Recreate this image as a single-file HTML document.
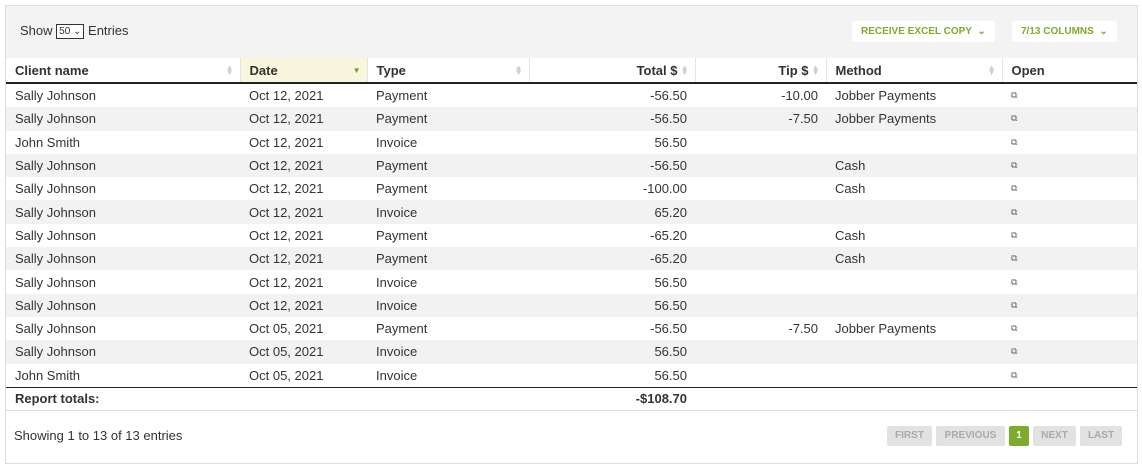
<!DOCTYPE html><html><head><style>
body{margin:0;width:1142px;height:468px;background:#fff;font-family:"Liberation Sans",sans-serif;color:#333;}
.box{position:absolute;left:5px;top:5px;width:1131px;height:457px;border:1px solid #ddd;background:#fff}
.top{position:absolute;left:0;top:0;width:1131px;height:52px;background:#f3f3f3}
.show{position:absolute;left:14px;top:17px;font-size:13px;color:#333}
.sel{display:inline-block;border:1px solid #333;font-size:10px;padding:0 2px;height:13px;line-height:13px;vertical-align:1px;background:#fff}
.btn{position:absolute;top:15px;height:21px;background:#fff;color:#7dab2e;font-weight:bold;font-size:10px;line-height:21px;padding:0 9px;border-radius:2px}
table{position:absolute;left:0;top:52px;border-collapse:collapse;width:1131px;font-size:13px;table-layout:fixed}
th{height:24px;text-align:left;font-weight:bold;font-size:13px;padding:0 9px;border-left:1px solid #e4e4e4;border-bottom:2px solid #222;position:relative;color:#333}
th:first-child{border-left:none}
td{height:23.3px;padding:0 9px;white-space:nowrap}
tr.g td{background:#f2f2f2}
.r{text-align:right}
td.r,th.r{padding-right:8px}
th.r{padding-right:17px}
.ar{position:absolute;right:6px;top:7px;font-size:8px;color:#ccc;line-height:5px}
.ic{font-size:9px;color:#666}
tr.tot td{border-top:1px solid #222;border-bottom:1px solid #ddd;font-weight:bold;height:22px}
.foot{position:absolute;left:14px;top:428px;font-size:13px}
.pg{position:absolute;top:426px;height:20px;line-height:20px;font-size:10px;font-weight:bold;color:#aaa;background:#e2e2e2;text-align:center;border-radius:2px}
</style></head><body>
<div class="box">
<div class="top"></div>
<div class="show">Show <span class="sel">50 ⌄</span> Entries</div>
<div class="btn" style="left:846px">RECEIVE EXCEL COPY &nbsp;⌄</div>
<div class="btn" style="left:1006px">7/13 COLUMNS &nbsp;⌄</div>
<table>
<colgroup><col style="width:234px"><col style="width:127px"><col style="width:162px"><col style="width:166px"><col style="width:131px"><col style="width:176px"><col></colgroup>
<tr><th>Client name<span class="ar">▲<br>▼</span></th><th style="background:#f8f6dc">Date<span class="ar" style="color:#6da02a;top:10px">▼</span></th><th>Type<span class="ar">▲<br>▼</span></th><th class="r">Total $<span class="ar">▲<br>▼</span></th><th class="r">Tip $<span class="ar">▲<br>▼</span></th><th>Method<span class="ar">▲<br>▼</span></th><th>Open</th></tr>
<tr><td>Sally Johnson</td><td>Oct 12, 2021</td><td>Payment</td><td class="r">-56.50</td><td class="r">-10.00</td><td>Jobber Payments</td><td class="ic">⧉</td></tr>
<tr class="g"><td>Sally Johnson</td><td>Oct 12, 2021</td><td>Payment</td><td class="r">-56.50</td><td class="r">-7.50</td><td>Jobber Payments</td><td class="ic">⧉</td></tr>
<tr><td>John Smith</td><td>Oct 12, 2021</td><td>Invoice</td><td class="r">56.50</td><td></td><td></td><td class="ic">⧉</td></tr>
<tr class="g"><td>Sally Johnson</td><td>Oct 12, 2021</td><td>Payment</td><td class="r">-56.50</td><td></td><td>Cash</td><td class="ic">⧉</td></tr>
<tr><td>Sally Johnson</td><td>Oct 12, 2021</td><td>Payment</td><td class="r">-100.00</td><td></td><td>Cash</td><td class="ic">⧉</td></tr>
<tr class="g"><td>Sally Johnson</td><td>Oct 12, 2021</td><td>Invoice</td><td class="r">65.20</td><td></td><td></td><td class="ic">⧉</td></tr>
<tr><td>Sally Johnson</td><td>Oct 12, 2021</td><td>Payment</td><td class="r">-65.20</td><td></td><td>Cash</td><td class="ic">⧉</td></tr>
<tr class="g"><td>Sally Johnson</td><td>Oct 12, 2021</td><td>Payment</td><td class="r">-65.20</td><td></td><td>Cash</td><td class="ic">⧉</td></tr>
<tr><td>Sally Johnson</td><td>Oct 12, 2021</td><td>Invoice</td><td class="r">56.50</td><td></td><td></td><td class="ic">⧉</td></tr>
<tr class="g"><td>Sally Johnson</td><td>Oct 12, 2021</td><td>Invoice</td><td class="r">56.50</td><td></td><td></td><td class="ic">⧉</td></tr>
<tr><td>Sally Johnson</td><td>Oct 05, 2021</td><td>Payment</td><td class="r">-56.50</td><td class="r">-7.50</td><td>Jobber Payments</td><td class="ic">⧉</td></tr>
<tr class="g"><td>Sally Johnson</td><td>Oct 05, 2021</td><td>Invoice</td><td class="r">56.50</td><td></td><td></td><td class="ic">⧉</td></tr>
<tr><td>John Smith</td><td>Oct 05, 2021</td><td>Invoice</td><td class="r">56.50</td><td></td><td></td><td class="ic">⧉</td></tr>
<tr class="tot"><td>Report totals:</td><td></td><td></td><td class="r">-$108.70</td><td></td><td></td><td></td></tr>
</table>
</div>
<div class="foot">Showing 1 to 13 of 13 entries</div>
<div class="pg" style="left:887px;width:45px">FIRST</div>
<div class="pg" style="left:936px;width:69px">PREVIOUS</div>
<div class="pg" style="left:1009px;width:20px;background:#7dab2e;color:#fff">1</div>
<div class="pg" style="left:1033px;width:43px">NEXT</div>
<div class="pg" style="left:1080px;width:42px">LAST</div>
</body></html>
